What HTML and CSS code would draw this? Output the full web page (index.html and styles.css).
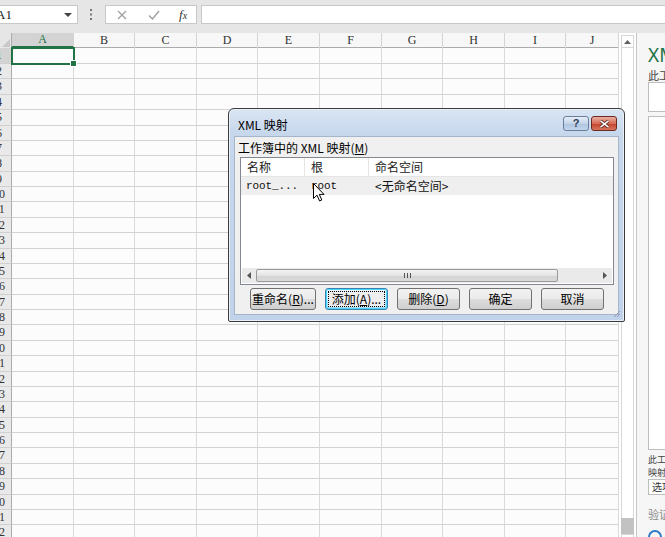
FILE: index.html
```html
<!DOCTYPE html>
<html lang="zh-CN">
<head>
<meta charset="utf-8">
<title>XML 映射</title>
<link rel="stylesheet" href="styles.css">
</head>
<body>
<div class="app">
  <div class="fbar">
    <div class="namebox"><span class="nb-text">A1</span><span class="nb-arrow"></span></div>
    <div class="dots"><svg width="3" height="11" viewBox="0 0 3 11"><rect x="0" y="0" width="2" height="2" fill="#777"/><rect x="0" y="4.5" width="2" height="2" fill="#777"/><rect x="0" y="9" width="2" height="2" fill="#777"/></svg></div>
    <div class="fxbox">
      <svg class="fx-x" width="10" height="10" viewBox="0 0 10 10"><path d="M1 1L9 9M9 1L1 9" stroke="#a0a0a0" stroke-width="1.3" fill="none"/></svg>
      <svg class="fx-v" width="12" height="10" viewBox="0 0 12 10"><path d="M1 5.5L4.5 9L11 1" stroke="#a0a0a0" stroke-width="1.4" fill="none"/></svg>
      <span class="fx-f">f<span class="fx-sub">x</span></span>
    </div>
    <div class="finput"></div>
  </div>
  <div class="main">
    <div class="sheet">
      <div class="hdr">
        <span class="corner"><svg width="8" height="8" viewBox="0 0 8 8"><path d="M8 0V8H0Z" fill="#c8c8c8"/></svg></span>
        <span class="ch sel">A</span><span class="ch">B</span><span class="ch">C</span><span class="ch">D</span><span class="ch">E</span><span class="ch">F</span><span class="ch">G</span><span class="ch">H</span><span class="ch">I</span><span class="ch">J</span>
      </div>
      <div class="r first"><b><span>1</span></b><i class="a1"></i><i></i><i></i><i></i><i></i><i></i><i></i><i></i><i></i><i></i></div>
      <div class="r"><b><span>2</span></b><i></i><i></i><i></i><i></i><i></i><i></i><i></i><i></i><i></i><i></i></div>
      <div class="r"><b><span>3</span></b><i></i><i></i><i></i><i></i><i></i><i></i><i></i><i></i><i></i><i></i></div>
      <div class="r"><b><span>4</span></b><i></i><i></i><i></i><i></i><i></i><i></i><i></i><i></i><i></i><i></i></div>
      <div class="r"><b><span>5</span></b><i></i><i></i><i></i><i></i><i></i><i></i><i></i><i></i><i></i><i></i></div>
      <div class="r"><b><span>6</span></b><i></i><i></i><i></i><i></i><i></i><i></i><i></i><i></i><i></i><i></i></div>
      <div class="r"><b><span>7</span></b><i></i><i></i><i></i><i></i><i></i><i></i><i></i><i></i><i></i><i></i></div>
      <div class="r"><b><span>8</span></b><i></i><i></i><i></i><i></i><i></i><i></i><i></i><i></i><i></i><i></i></div>
      <div class="r"><b><span>9</span></b><i></i><i></i><i></i><i></i><i></i><i></i><i></i><i></i><i></i><i></i></div>
      <div class="r"><b><span>10</span></b><i></i><i></i><i></i><i></i><i></i><i></i><i></i><i></i><i></i><i></i></div>
      <div class="r"><b><span>11</span></b><i></i><i></i><i></i><i></i><i></i><i></i><i></i><i></i><i></i><i></i></div>
      <div class="r"><b><span>12</span></b><i></i><i></i><i></i><i></i><i></i><i></i><i></i><i></i><i></i><i></i></div>
      <div class="r"><b><span>13</span></b><i></i><i></i><i></i><i></i><i></i><i></i><i></i><i></i><i></i><i></i></div>
      <div class="r"><b><span>14</span></b><i></i><i></i><i></i><i></i><i></i><i></i><i></i><i></i><i></i><i></i></div>
      <div class="r"><b><span>15</span></b><i></i><i></i><i></i><i></i><i></i><i></i><i></i><i></i><i></i><i></i></div>
      <div class="r"><b><span>16</span></b><i></i><i></i><i></i><i></i><i></i><i></i><i></i><i></i><i></i><i></i></div>
      <div class="r"><b><span>17</span></b><i></i><i></i><i></i><i></i><i></i><i></i><i></i><i></i><i></i><i></i></div>
      <div class="r"><b><span>18</span></b><i></i><i></i><i></i><i></i><i></i><i></i><i></i><i></i><i></i><i></i></div>
      <div class="r"><b><span>19</span></b><i></i><i></i><i></i><i></i><i></i><i></i><i></i><i></i><i></i><i></i></div>
      <div class="r"><b><span>20</span></b><i></i><i></i><i></i><i></i><i></i><i></i><i></i><i></i><i></i><i></i></div>
      <div class="r"><b><span>21</span></b><i></i><i></i><i></i><i></i><i></i><i></i><i></i><i></i><i></i><i></i></div>
      <div class="r"><b><span>22</span></b><i></i><i></i><i></i><i></i><i></i><i></i><i></i><i></i><i></i><i></i></div>
      <div class="r"><b><span>23</span></b><i></i><i></i><i></i><i></i><i></i><i></i><i></i><i></i><i></i><i></i></div>
      <div class="r"><b><span>24</span></b><i></i><i></i><i></i><i></i><i></i><i></i><i></i><i></i><i></i><i></i></div>
      <div class="r"><b><span>25</span></b><i></i><i></i><i></i><i></i><i></i><i></i><i></i><i></i><i></i><i></i></div>
      <div class="r"><b><span>26</span></b><i></i><i></i><i></i><i></i><i></i><i></i><i></i><i></i><i></i><i></i></div>
      <div class="r"><b><span>27</span></b><i></i><i></i><i></i><i></i><i></i><i></i><i></i><i></i><i></i><i></i></div>
      <div class="r"><b><span>28</span></b><i></i><i></i><i></i><i></i><i></i><i></i><i></i><i></i><i></i><i></i></div>
      <div class="r"><b><span>29</span></b><i></i><i></i><i></i><i></i><i></i><i></i><i></i><i></i><i></i><i></i></div>
      <div class="r"><b><span>30</span></b><i></i><i></i><i></i><i></i><i></i><i></i><i></i><i></i><i></i><i></i></div>
      <div class="r"><b><span>31</span></b><i></i><i></i><i></i><i></i><i></i><i></i><i></i><i></i><i></i><i></i></div>
      <div class="r"><b><span>32</span></b><i></i><i></i><i></i><i></i><i></i><i></i><i></i><i></i><i></i><i></i></div>
      <div class="r"><b><span>33</span></b><i></i><i></i><i></i><i></i><i></i><i></i><i></i><i></i><i></i><i></i></div>
    </div>
    <div class="vscroll">
      <div class="vs-btn"><svg width="7" height="4" viewBox="0 0 7 4"><path d="M0 4L3.5 0L7 4Z" fill="#606060"/></svg></div>
      <div class="vs-track"></div>
      <div class="vs-thumb"></div>
      <div class="vs-btn"><svg width="7" height="4" viewBox="0 0 7 4"><path d="M0 0L3.5 4L7 0Z" fill="#606060"/></svg></div>
    </div>
    <div class="pane">
      <div class="p-title">XML 源</div>
      <div class="p-text">此工作簿中的 XML 映射</div>
      <div class="p-input"></div>
      <div class="p-box"></div>
      <div class="p-text2">此工作簿中的</div>
      <div class="p-text2">映射</div>
      <div class="p-input2">选项</div>
      <div class="p-text3">验证映射</div>
      <div class="p-icon"></div>
    </div>
  </div>

  <div class="dialog">
    <div class="d-title">
      <span class="d-caption">XML 映射</span>
      <span class="d-btns">
        <span class="d-help">?</span>
        <span class="d-close"><svg width="11" height="8" viewBox="0 0 11 8"><path d="M1.5 0.8L9.5 7.2M9.5 0.8L1.5 7.2" stroke="#4a1a12" stroke-width="3" fill="none"/><path d="M1.5 0.8L9.5 7.2M9.5 0.8L1.5 7.2" stroke="#fff" stroke-width="1.6" fill="none"/></svg></span>
      </span>
    </div>
    <div class="d-body">
      <div class="d-label">工作簿中的 XML 映射(<u>M</u>)</div>
      <div class="lv">
        <div class="lv-head"><span class="c1">名称</span><span class="c2">根</span><span class="c3">命名空间</span></div>
        <div class="lv-row"><span class="c1 mono">root_...</span><span class="c2 mono">root</span><span class="c3">&lt;无命名空间&gt;</span></div>
        <div class="lv-empty"></div>
        <div class="hs">
          <span class="hs-arr"><svg width="4" height="7" viewBox="0 0 4 7"><path d="M4 0L0 3.5L4 7Z" fill="#555"/></svg></span>
          <span class="hs-thumb"><span class="grip"></span></span>
          <span class="hs-gap"></span>
          <span class="hs-arr"><svg width="4" height="7" viewBox="0 0 4 7"><path d="M0 0L4 3.5L0 7Z" fill="#555"/></svg></span>
        </div>
      </div>
      <div class="d-buttons">
        <span class="btn w66">重命名(<u>R</u>)...</span>
        <span class="btn focus"><span class="fr">添加(<u>A</u>)...</span></span>
        <span class="btn">删除(<u>D</u>)</span>
        <span class="btn">确定</span>
        <span class="btn">取消</span>
      </div>
    </div>
    <svg class="grip-corner" width="7" height="7" viewBox="0 0 7 7"><path d="M7 1L1 7M7 4L4 7" stroke="#8a9bb2" stroke-width="1"/></svg>
  </div>

  <svg class="cursor" width="12" height="19" viewBox="0 0 12 19"><path d="M0.5 0.5V15.5L4 12.2L6.6 18L8.8 17L6.3 11.4H11Z" fill="#fff" stroke="#000" stroke-width="1"/></svg>
</div>
</body>
</html>
```
FILE: styles.css
```css
* { box-sizing: border-box; margin: 0; padding: 0; }
html, body { width: 665px; height: 537px; overflow: hidden; }
body { background: #e6e6e6; font-family: "Liberation Serif", serif; color: #222; }
.app { position: relative; width: 665px; height: 537px; overflow: hidden; }

/* formula bar */
.fbar { height: 33px; display: flex; align-items: flex-start; padding-top: 5px; }
.namebox { width: 78px; height: 19px; background: #fff; border: 1px solid #c8c8c8; border-left: none; display: flex; align-items: center; justify-content: space-between; padding-right: 5px; }
.nb-text { font-size: 13px; margin-left: -4px; color: #222; line-height: 1; }
.nb-arrow { width: 0; height: 0; border-left: 4px solid transparent; border-right: 4px solid transparent; border-top: 4px solid #444; }
.dots { width: 27px; height: 19px; display: flex; align-items: center; justify-content: center; }
.fxbox { width: 92px; height: 19px; background: #fff; border: 1px solid #c8c8c8; display: flex; align-items: center; padding-left: 11px; }
.fx-x { margin-right: 21px; }
.fx-v { margin-right: 19px; }
.fx-f { font-family: "Liberation Serif", serif; font-style: italic; font-size: 13px; color: #333; line-height: 1; }
.fx-sub { font-size: 10px; }
.finput { flex: 1; margin-left: 4px; height: 19px; background: #fff; border: 1px solid #c8c8c8; border-right: none; }

/* main area */
.main { display: flex; height: 514px; }
.sheet { width: 619px; background: #fcfcfc; overflow: hidden; }
.hdr, .r { display: grid; grid-template-columns: 12px 62px 61px 62px 61px 62px 62px 61px 62px 61px 53px; }
.hdr { height: 15px; background: #f7f7f7; border-bottom: 1px solid #ababab; }
.corner { background: #e6e6e6; border-right: 1px solid #ababab; display: flex; align-items: flex-end; justify-content: flex-end; padding: 0 1px 1px 0; }
.ch { font-size: 12px; line-height: 14px; text-align: center; color: #333; border-right: 1px solid #d4d4d4; }
.ch.sel { background: #d3d3d3; color: #217346; border-bottom: 2px solid #217346; line-height: 13px; }
.r { height: 15.375px; }
.r.first { height: 16px; }
.r b { font-weight: normal; background: #e9e9e9; border-right: 1px solid #ababab; border-bottom: 1px solid #d0d0d0; overflow: hidden; display: block; }
.r b span { display: block; width: 24px; margin-left: -13px; text-align: center; font-size: 12px; line-height: 14px; color: #333; }
.r.first b { background: #d3d3d3; }
.r i { display: block; border-right: 1px solid #dadada; border-bottom: 1px solid #d2d2d2; }
.r i.a1 { outline: 2px solid #217346; outline-offset: -1px; position: relative; z-index: 1; }
.r i.a1::after { content: ""; position: absolute; right: -4px; bottom: -4px; width: 5px; height: 5px; background: #217346; border: 1px solid #fff; }

/* vertical scrollbar */
.vscroll { width: 18px; background: #fff; padding: 2px 2px 0 2px; display: flex; flex-direction: column; border-right: 1px solid #c6c6c6; }
.vs-btn { height: 13px; border: 1px solid #d6d6d6; background: #fff; display: flex; align-items: center; justify-content: center; }
.vs-track { flex: 1; background: #fff; border-left: 1px solid #d6d6d6; border-right: 1px solid #d6d6d6; }
.vs-thumb { height: 16px; background: #c2c2c2; }

/* task pane */
.pane { flex: 1; background: #f6f6f6; padding-left: 11px; overflow: hidden; white-space: nowrap; font-family: "Noto Sans CJK SC", sans-serif; }
.p-title { font-family: "Noto Sans", "Noto Sans CJK SC", sans-serif; font-size: 19px; color: #217346; line-height: 22px; margin-top: 11px; }
.p-text { font-size: 11px; color: #444; line-height: 13px; margin-top: 3px; }
.p-input { height: 30px; background: #fff; border: 1px solid #bdbdbd; border-right: none; }
.p-box { height: 334px; background: #fff; border: 1px solid #bdbdbd; border-right: none; margin-top: 4px; }
.p-text2 { font-size: 9px; color: #444; line-height: 13px; height: 13px; }
.p-box + .p-text2 { margin-top: 3px; }
.p-input2 { height: 16px; background: #fff; border: 1px solid #bdbdbd; border-right: none; font-size: 10px; line-height: 14px; padding-left: 3px; color: #333; }
.p-text3 { font-size: 11px; color: #888; line-height: 12px; margin-top: 13px; }
.p-icon { width: 14px; height: 14px; border-radius: 50%; border: 2px solid #2b79c9; margin-top: 10px; }

/* dialog */
.dialog { position: absolute; left: 228px; top: 108px; width: 397px; height: 214px; border: 1px solid #3c3c3c; border-radius: 6px 6px 2px 2px; background: linear-gradient(#d9e5f3 0px, #c6d7ec 26px, #c1d3ea 100%); padding: 0 5px 6px 5px; display: flex; flex-direction: column; font-family: "Noto Sans CJK SC", sans-serif; color: #000; box-shadow: inset 0 0 0 1px #e9f0f8; }
.d-title { height: 27px; display: flex; align-items: flex-start; justify-content: space-between; }
.d-caption { font-size: 12px; line-height: 14px; margin-top: 9px; margin-left: 4px; }
.d-btns { display: flex; gap: 2px; margin-top: 7px; margin-right: 2px; }
.d-help { width: 26px; height: 15px; border: 1px solid #6a7f9c; border-radius: 3px; background: linear-gradient(#e7eef7, #c3d4e9 50%, #aec4df 51%, #c2d5ec); font-family: "Liberation Sans", sans-serif; font-size: 11px; font-weight: bold; color: #2d3d55; text-align: center; line-height: 13px; }
.d-close { width: 26px; height: 15px; border: 1px solid #6b2a20; border-radius: 3px; background: linear-gradient(#eab0a2, #d66c55 50%, #c3422b 51%, #d7765d); display: flex; align-items: center; justify-content: center; }
.d-body { flex: 1; background: #f0f0f0; border: 1px solid #a5b6cc; padding: 3px 4px 0 5px; display: flex; flex-direction: column; }
.d-label { font-size: 12px; line-height: 16px; margin-left: -2px; }
.d-label u, .btn u { text-underline-offset: 1px; }
.lv { margin-top: 1px; height: 128px; background: #fff; border: 1px solid #828790; display: flex; flex-direction: column; }
.lv-head, .lv-row { display: grid; grid-template-columns: 64px 64px 1fr; }
.lv-head { height: 19px; border-bottom: 1px solid #e5e5e5; font-size: 12px; line-height: 18px; color: #222; }
.lv-head span { padding-left: 6px; }
.lv-head .c1, .lv-head .c2 { border-right: 1px solid #e5e5e5; }
.lv-row { height: 18px; background: #efefef; font-size: 12px; line-height: 18px; color: #111; }
.lv-row span { padding-left: 5px; }
.lv-row .c2 { padding-left: 6px; }
.lv-row .c3 { padding-left: 6px; }
.mono { font-family: "Liberation Mono", monospace; font-size: 11px; letter-spacing: -0.1px; }
.lv-empty { flex: 1; }
.hs { height: 15px; margin: 0 1px 1px 1px; display: flex; align-items: center; background: #eaeaea; }
.hs-arr { width: 14px; height: 15px; display: flex; align-items: center; justify-content: center; }
.hs-thumb { width: 302px; height: 13px; border: 1px solid #9a9a9a; border-radius: 2px; background: linear-gradient(#f3f3f3, #e4e4e4 50%, #d3d3d3 51%, #dadada); display: flex; align-items: center; justify-content: center; }
.grip { width: 7px; height: 5px; background: repeating-linear-gradient(90deg, #555 0 1px, transparent 1px 3px); }
.hs-gap { flex: 1; }
.d-buttons { display: flex; gap: 9px; margin-top: 3px; padding-left: 10px; }
.btn { width: 63px; height: 22px; border: 1px solid #707070; border-radius: 3px; background: linear-gradient(#f2f2f2, #ebebeb 50%, #dddddd 51%, #cfcfcf); font-size: 12px; line-height: 20px; text-align: center; color: #000; }
.btn.w66 { width: 66px; }
.btn.focus { border-color: #3c7fb1; background: linear-gradient(#eaf6fd, #d9f0fc 50%, #bee6fd 51%, #a7d9f5); padding: 2px; box-shadow: inset 0 0 0 1px #48d8fb; }
.btn.focus .fr { display: block; height: 16px; line-height: 16px; outline: 1px dotted #000; outline-offset: -1px; background: #eeeeee; }
.grip-corner { position: absolute; right: 4px; bottom: 4px; }

.cursor { position: absolute; left: 313px; top: 183px; }
```
